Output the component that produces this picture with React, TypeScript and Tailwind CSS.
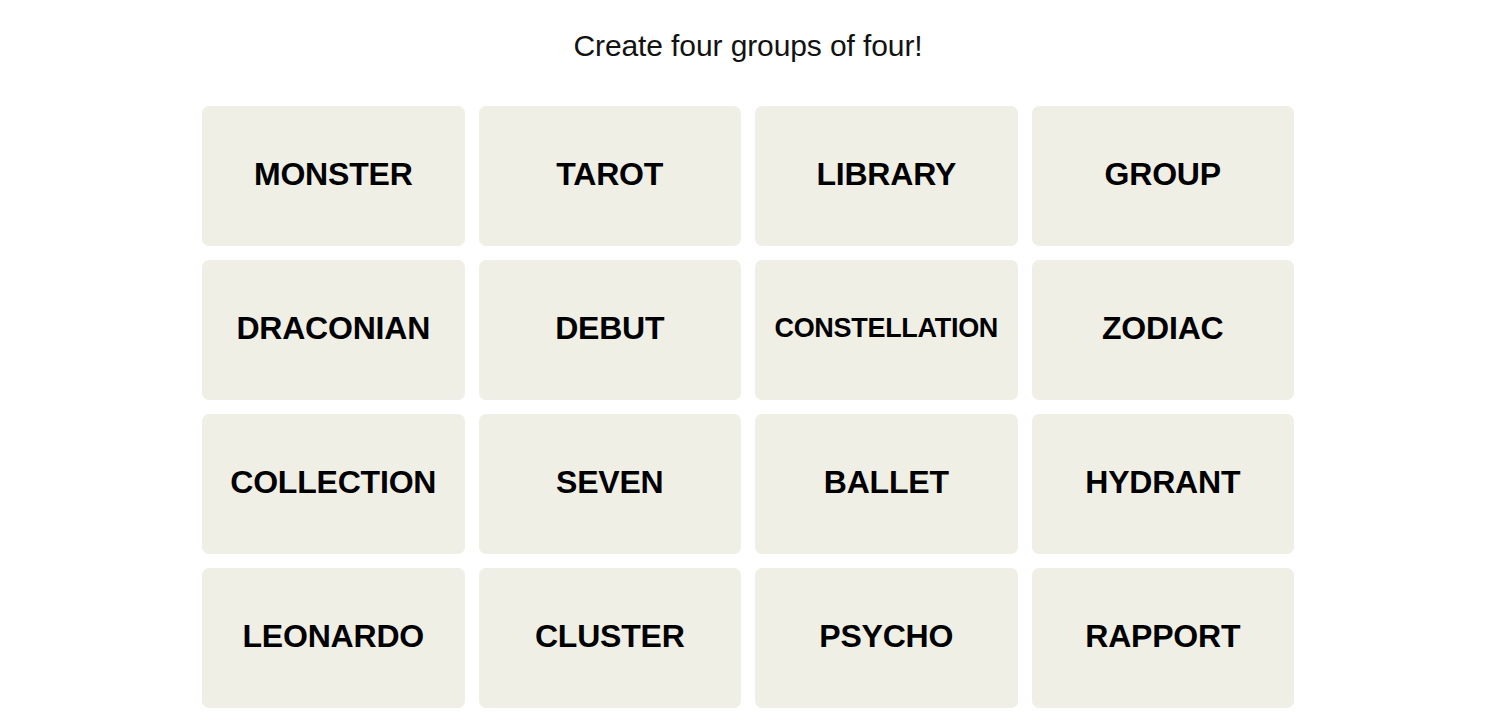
import React from "react";

const words = [
  "MONSTER", "TAROT", "LIBRARY", "GROUP",
  "DRACONIAN", "DEBUT", "CONSTELLATION", "ZODIAC",
  "COLLECTION", "SEVEN", "BALLET", "HYDRANT",
  "LEONARDO", "CLUSTER", "PSYCHO", "RAPPORT",
];

export default function App() {
  return (
    <div className="w-[1496px] min-h-[722px] bg-white" style={{ fontFamily: '"Liberation Sans", Arial, sans-serif' }}>
      <div className="flex flex-col items-center pt-[26px]">
        <h1 className="text-[30px] leading-[40px] font-normal text-[#121212] tracking-[-0.1px]">
          Create four groups of four!
        </h1>
        <div className="mt-[40px] grid grid-cols-4 gap-[14px] w-[1092px]">
          {words.map((w) => (
            <div
              key={w}
              className="h-[140px] rounded-[7px] bg-[#efefe6] flex items-center justify-center pb-[4px]"
            >
              <span
                className={
                  w === "CONSTELLATION"
                    ? "text-[27px] font-bold text-black tracking-[-0.3px]"
                    : "text-[32px] font-bold text-black tracking-[-0.2px]"
                }
              >
                {w}
              </span>
            </div>
          ))}
        </div>
      </div>
    </div>
  );
}
